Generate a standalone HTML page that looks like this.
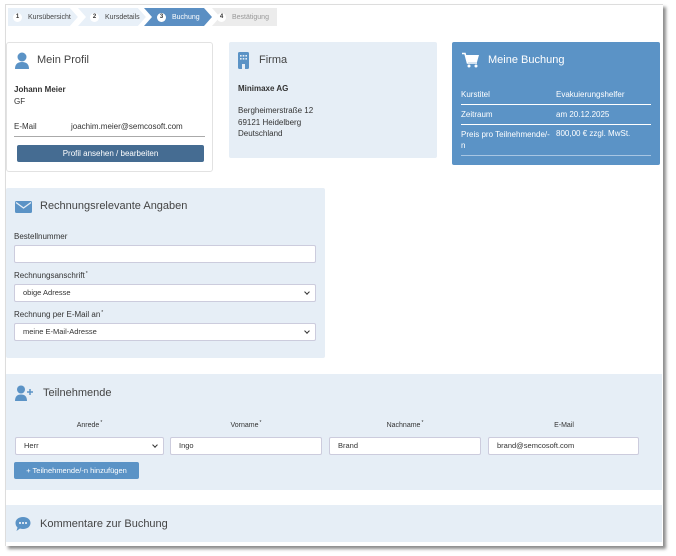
<!DOCTYPE html>
<html><head><meta charset="utf-8"><style>
*{box-sizing:border-box;margin:0;padding:0}
body{width:676px;height:556px;background:#fff;position:relative;overflow:hidden;font-family:"Liberation Sans","DejaVu Sans",sans-serif;color:#333}
.frame{position:absolute;left:5px;top:4px;width:658px;height:542px;background:#fff;border-left:1px solid #ddd;border-top:1px solid #ddd;box-shadow:3px 3px 3px rgba(0,0,0,.45)}
.a{position:absolute}
.t{font-size:8px;line-height:10px;white-space:nowrap}
.box{position:absolute;background:#e6eef6}
.h{position:absolute;font-size:11px;color:#444;white-space:nowrap}
.inp{position:absolute;background:#fff;border:1px solid #ccd;border-radius:2px;height:18px;font-size:7.5px;line-height:16px;padding-left:8px;color:#333}
.sel::after{content:"";position:absolute;right:6px;top:5px;width:3px;height:3px;border-right:1.2px solid #333;border-bottom:1.2px solid #333;transform:rotate(45deg)}
.step{position:absolute;top:8px;height:18px;font-size:7px;color:#444;display:flex;align-items:center}
.num{display:inline-block;width:9px;height:9px;border-radius:50%;background:#fff;color:#333;font-size:6px;line-height:9px;text-align:center;font-weight:bold;margin-right:6px}
.st{position:relative;top:-3px;font-size:5px;margin-left:1px}
</style></head><body>
<div class="frame"></div>
<!-- breadcrumb -->
<svg class="a" style="left:8px;top:8px" width="270" height="18">
<polygon points="0,0 62,0 70,9 62,18 0,18" fill="#e8f0f8"/>
<polygon points="70,0 130,0 138,9 130,18 70,18 78,9" fill="#e8f0f8"/>
<polygon points="62,0 70,9 62,18 64,18 72,9 64,0" fill="#fff"/>
<polygon points="130,0 138,9 130,18 132,18 140,9 132,0" fill="#fff"/>
<polygon points="136,0 196,0 204,9 196,18 136,18 144,9" fill="#5b8fc3"/>
<polygon points="204,0 269,0 269,18 204,18 212,9" fill="#ececec"/>
</svg>
<div class="step" style="left:13px"><span class="num">1</span>Kursübersicht</div>
<div class="step" style="left:90px"><span class="num">2</span>Kursdetails</div>
<div class="step" style="left:157px;color:#fff"><span class="num">3</span>Buchung</div>
<div class="step" style="left:217px;color:#999"><span class="num">4</span>Bestätigung</div>

<!-- Mein Profil -->
<div class="a" style="left:6px;top:42px;width:207px;height:130px;background:#fff;border:1px solid #e2e2e2;border-radius:3px"></div>
<svg class="a" style="left:15px;top:52px" width="14" height="17"><circle cx="7" cy="5" r="4.5" fill="#5b93c6"/><path d="M0,17 Q0,10 7,10 Q14,10 14,17Z" fill="#5b93c6"/></svg>
<div class="h" style="left:37px;top:54px">Mein Profil</div>
<div class="t a" style="left:14px;top:85px;font-weight:bold">Johann Meier</div>
<div class="t a" style="left:14px;top:97px">GF</div>
<div class="t a" style="left:14px;top:122px">E-Mail</div>
<div class="t a" style="left:71px;top:122px">joachim.meier@semcosoft.com</div>
<div class="a" style="left:14px;top:136px;width:191px;height:1px;background:#aaa"></div>
<div class="a t" style="left:17px;top:145px;width:187px;height:17px;background:#456c92;color:#fff;text-align:center;line-height:17px;border-radius:2px">Profil ansehen / bearbeiten</div>

<!-- Firma -->
<div class="box" style="left:229px;top:42px;width:208px;height:116px;border-radius:2px"></div>
<svg class="a" style="left:238px;top:52px" width="11" height="17"><rect x="0" y="0" width="11" height="17" rx="1.5" fill="#5b93c6"/><g fill="#e6eef6"><rect x="2" y="3" width="1.6" height="1.6"/><rect x="4.7" y="3" width="1.6" height="1.6"/><rect x="7.4" y="3" width="1.6" height="1.6"/><rect x="2" y="6" width="1.6" height="1.6"/><rect x="4.7" y="6" width="1.6" height="1.6"/><rect x="7.4" y="6" width="1.6" height="1.6"/><rect x="4" y="12" width="3" height="5"/></g></svg>
<div class="h" style="left:259px;top:54px">Firma</div>
<div class="t a" style="left:238px;top:84px;font-weight:bold">Minimaxe AG</div>
<div class="t a" style="left:238px;top:105px;line-height:11.5px">Bergheimerstraße 12<br>69121 Heidelberg<br>Deutschland</div>

<!-- Meine Buchung -->
<div class="a" style="left:452px;top:42px;width:208px;height:123px;background:#5b93c6;border-radius:2px"></div>
<svg class="a" style="left:462px;top:52px" width="18" height="16"><path d="M0,1.5 H3 L5.5,11 H15" stroke="#fff" stroke-width="1.6" fill="none"/><path d="M3.5,3 H17 L15,10 H5.3Z" fill="#fff"/><circle cx="7" cy="14" r="1.5" fill="#fff"/><circle cx="14" cy="14" r="1.5" fill="#fff"/></svg>
<div class="h" style="left:488px;top:54px;color:#fff">Meine Buchung</div>
<div class="t a" style="left:461px;top:90px;color:#fff">Kurstitel</div>
<div class="t a" style="left:556px;top:90px;color:#fff">Evakuierungshelfer</div>
<div class="a" style="left:461px;top:104px;width:190px;height:1px;background:#fff"></div>
<div class="t a" style="left:461px;top:110px;color:#fff">Zeitraum</div>
<div class="t a" style="left:556px;top:110px;color:#fff">am 20.12.2025</div>
<div class="a" style="left:461px;top:124px;width:190px;height:1px;background:#fff"></div>
<div class="t a" style="left:461px;top:129px;color:#fff;line-height:11px">Preis pro Teilnehmende/-<br>n</div>
<div class="t a" style="left:556px;top:129px;color:#fff">800,00 € zzgl. MwSt.</div>
<div class="a" style="left:461px;top:155px;width:190px;height:1px;background:#a8c6e3"></div>

<!-- Rechnung -->
<div class="box" style="left:6px;top:188px;width:319px;height:170px;border-radius:2px"></div>
<svg class="a" style="left:15px;top:201px" width="17" height="12"><rect width="17" height="12" rx="1.5" fill="#5b93c6"/><path d="M1,1.5 L8.5,7 L16,1.5" stroke="#e6eef6" stroke-width="1.3" fill="none"/></svg>
<div class="h" style="left:40px;top:200px">Rechnungsrelevante Angaben</div>
<div class="t a" style="left:14px;top:232px">Bestellnummer</div>
<div class="inp" style="left:14px;top:245px;width:302px"></div>
<div class="t a" style="left:14px;top:271px">Rechnungsanschrift<span class="st">*</span></div>
<div class="inp sel" style="left:14px;top:284px;width:302px">obige Adresse</div>
<div class="t a" style="left:14px;top:310px">Rechnung per E-Mail an<span class="st">*</span></div>
<div class="inp sel" style="left:14px;top:323px;width:302px">meine E-Mail-Adresse</div>

<!-- Teilnehmende -->
<div class="box" style="left:6px;top:374px;width:656px;height:116px"></div>
<svg class="a" style="left:15px;top:385px" width="20" height="16"><circle cx="6" cy="4.5" r="4" fill="#5b93c6"/><path d="M0,16 Q0,9.5 6,9.5 Q12,9.5 12,16Z" fill="#5b93c6"/><path d="M15,4 V10 M12,7 H18" stroke="#5b93c6" stroke-width="1.5"/></svg>
<div class="h" style="left:43px;top:387px">Teilnehmende</div>
<div class="t a" style="left:15px;top:421px;width:149px;text-align:center;font-size:7px">Anrede<span class="st">*</span></div>
<div class="t a" style="left:170px;top:421px;width:152px;text-align:center;font-size:7px">Vorname<span class="st">*</span></div>
<div class="t a" style="left:329px;top:421px;width:152px;text-align:center;font-size:7px">Nachname<span class="st">*</span></div>
<div class="t a" style="left:488px;top:421px;width:152px;text-align:center;font-size:7px">E-Mail</div>
<div class="inp sel" style="left:15px;top:437px;width:149px">Herr</div>
<div class="inp" style="left:170px;top:437px;width:152px">Ingo</div>
<div class="inp" style="left:329px;top:437px;width:152px">Brand</div>
<div class="inp" style="left:488px;top:437px;width:151px">brand@semcosoft.com</div>
<div class="a t" style="left:14px;top:462px;width:125px;height:17px;background:#5b93c6;color:#fff;line-height:17px;text-align:center;border-radius:2px;font-size:7.5px">+ Teilnehmende/-n hinzufügen</div>

<!-- Kommentare -->
<div class="box" style="left:6px;top:505px;width:656px;height:37px"></div>
<svg class="a" style="left:15px;top:516px" width="16" height="16"><path d="M8,1 C12.5,1 15.5,3.5 15.5,7 C15.5,10.5 12.5,13 8,13 C7,13 6,12.8 5,12.5 L1.5,15 L2.5,11.5 C1.2,10.3 0.5,8.8 0.5,7 C0.5,3.5 3.5,1 8,1Z" fill="#5b93c6"/><g fill="#fff"><circle cx="5" cy="7" r="1"/><circle cx="8" cy="7" r="1"/><circle cx="11" cy="7" r="1"/></g></svg>
<div class="h" style="left:40px;top:518px">Kommentare zur Buchung</div>
</body></html>
